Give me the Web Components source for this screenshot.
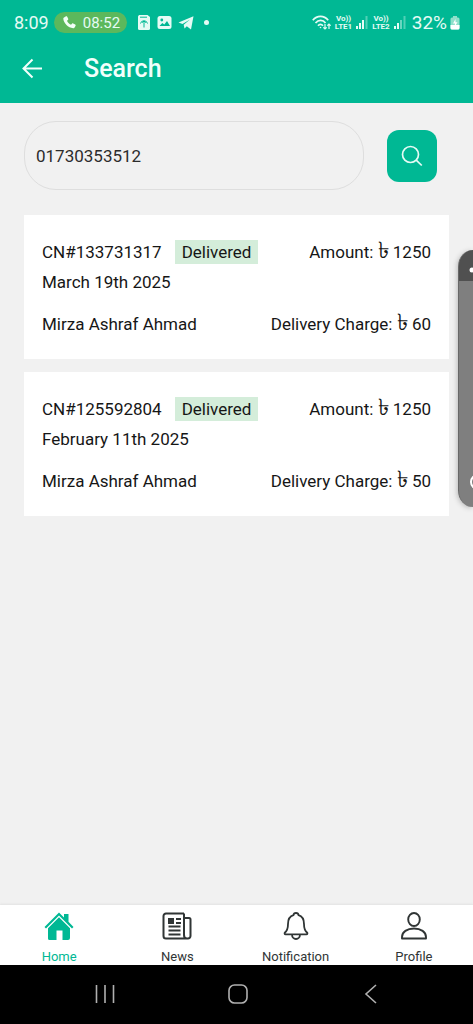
<!DOCTYPE html>
<html lang="en">
<head>
<meta charset="utf-8">
<meta name="viewport" content="width=device-width, initial-scale=1">
<title>Search</title>
<style>
  html, body { margin: 0; }
  body { font-family: Roboto, "Noto Sans", sans-serif; background: #f1f1f1; color: #161616; }
</style>
</head>
<body>
<search-screen></search-screen>
<script>
const define = (name, html, setup) => {
  const template = document.createElement('template');
  template.innerHTML = html;
  customElements.define(name, class extends HTMLElement {
    connectedCallback() {
      if (this.shadowRoot) return;
      this.attachShadow({ mode: 'open' }).append(template.content.cloneNode(true));
      if (setup) setup(this, this.shadowRoot);
    }
  });
};

define('signal-bars', `
<style>:host { display: block; width: 12px; height: 13px; } svg { display: block; }</style>
<svg width="12" height="13" fill="#e6fbf5" aria-hidden="true">
  <rect x="0" y="10" width="2" height="3"/><rect x="3" y="7" width="2" height="6"/>
  <rect class="b" x="6" y="4" width="2" height="9"/><rect x="9.5" y="0" width="2" height="13" opacity=".35"/>
</svg>`, (host, root) => {
  if (host.hasAttribute('weak')) root.querySelector('.b').setAttribute('opacity', '.45');
});

define('volte-label', `
<style>
  :host { display: block; font-size: 8px; line-height: 8px; font-weight: 700; text-align: center; color: #e6fbf5; }
  span { display: block; }
</style>
<span>Vo))</span><span><slot></slot></span>`);

define('status-bar', `
<style>
  :host { display: flex; align-items: center; justify-content: space-between; height: 45px; padding: 0 13px 0 14px; color: #e6fbf5; font-size: 18px; line-height: 20px; }
  div { display: flex; align-items: center; }
  svg { display: block; flex: none; }
  .call { gap: 7px; height: 21px; padding: 0 7px 0 9px; margin: 0 10px 0 5px; border-radius: 11px; background: #5cb85c; font-size: 15px; }
  .notes { gap: 6px; }
  .dot { width: 5px; height: 5px; margin-left: 4px; border-radius: 50%; background: #e6fbf5; }
  .net { gap: 4px; }
  .pct { margin: 0 -1px 0 2px; font-size: 19px; }
</style>
<div>
  <span>8:09</span>
  <div class="call">
    <svg width="13" height="13" viewBox="0 0 13 13"><path d="M1 1.500 3 .300c.5-.2.9-.1 1.200.4l1 2c.2.5.1.9-.3 1.200L4 4.700C4.700 6.400 6 7.800 8 8.800l1-1.100c.4-.4.8-.4 1.200-.2l2 1.100c.5.3.6.7.400 1.200l-1 1.800c-.3.600-.8.800-1.400.7C5 11.700.8 7.400.300 2.800.3 2.200.5 1.800 1 1.500Z" fill="#f2fff8"/></svg>
    <span>08:52</span>
  </div>
  <div class="notes">
    <svg width="14" height="15" viewBox="0 0 14 15"><path fill="#e6fbf5" d="M2 0h8.500L13 2v11.500a1.500 1.500 0 0 1-1.500 1.500h-9A1.500 1.500 0 0 1 1 13.500V1.500Z"/><path d="M3.500 8.500A3.600 3.600 0 0 1 10.500 8.500M7 12.500V6M5.300 7.700l1.700-1.700 1.700 1.700M3 2.200h7" fill="none" stroke="#00b894" stroke-width="1"/></svg>
    <svg width="15" height="15" viewBox="0 0 15 15"><rect x=".5" y="1" width="14" height="13" rx="2.500" fill="#e6fbf5"/><circle cx="4.800" cy="5" r="1.400" fill="#00b894"/><path d="m2.500 11 2.800-3 2 1.600L10 6l3 5Z" fill="#00b894"/></svg>
    <svg width="16" height="14" viewBox="0 0 16 14"><path d="M.5 6.500 15.500.3 13 13.500 8.800 10.200 6.500 12.500 5.700 8.800 12 3.500 4.500 8Z" fill="#e6fbf5"/></svg>
    <span class="dot"></span>
  </div>
</div>
<div class="net">
  <svg width="19" height="16" viewBox="0 0 19 16" fill="none" stroke="#e6fbf5" stroke-width="1.700"><path d="M.8 5.200C5 0 12 0 16.200 5.200M3.500 8C6.500 4.500 11 4.500 13.500 8M6 10.800C7.500 9 9.500 9 11 10.800"/><circle cx="8.500" cy="12.500" r=".8" fill="#e6fbf5" stroke="none"/><path d="M13 9v5M11.300 12.300 13 14l1.700-1.700M17 14V9M15.300 10.700 17 9l1.700 1.700" stroke-width="1.200"/></svg>
  <volte-label>LTE1</volte-label>
  <signal-bars></signal-bars>
  <volte-label>LTE2</volte-label>
  <signal-bars weak></signal-bars>
  <span class="pct">32%</span>
  <svg width="10" height="14" viewBox="0 0 10 14"><rect x="3" width="4" height="2" fill="#8fe0cb"/><rect x=".5" y="1.500" width="9" height="12" rx="1.500" fill="#8fe0cb"/><path d="M.5 9h9v3a1.500 1.500 0 0 1-1.500 1.500H2A1.500 1.500 0 0 1 .5 12Z" fill="#fff"/><path d="M5.500 3 3 7.500h2L4.500 11 7.500 6.300h-2Z" fill="#fff"/></svg>
</div>`);

define('app-header', `
<style>
  :host { display: flex; align-items: center; gap: 40px; height: 48px; padding: 0 22px 10px; color: #f2fffb; }
  button { display: block; padding: 0; border: 0; background: none; color: inherit; }
  svg { display: block; }
  h1 { margin: 0; font-size: 25px; line-height: 32px; font-weight: 500; }
</style>
<button aria-label="Back"><svg width="22" height="22" viewBox="0 0 22 22" fill="none" stroke="currentColor" stroke-width="2"><path d="M20 10.500H2M10.500 1.500 1.500 10.500l9 9"/></svg></button>
<h1><slot></slot></h1>`);

define('search-form', `
<style>
  :host { display: block; }
  form { display: flex; align-items: center; gap: 23px; padding: 0 12px 0 0; }
  input { box-sizing: border-box; flex: 1; min-width: 0; height: 69px; padding: 0 11px; border: 1px solid #dedede; border-radius: 32px; background: #f1f1f1; color: #2c2c2c; font: 17px/24px Roboto, sans-serif; outline: 0; }
  button { display: grid; place-items: center; width: 50px; height: 52px; padding: 0; border: 0; border-radius: 12px; background: #00b894; }
  svg { display: block; }
</style>
<form>
  <input type="text" inputmode="numeric" aria-label="Phone number" value="01730353512">
  <button type="button" aria-label="Search"><svg width="22" height="22" viewBox="0 0 22 22" fill="none" stroke="#e6fbf5" stroke-width="1.700"><circle cx="9.500" cy="9.500" r="8"/><path d="m15.200 15.200 5.600 5.300"/></svg></button>
</form>`);

define('parcel-card', `
<style>
  :host { display: block; padding: 22px 18px 20px; background: #fff; font-size: 17px; line-height: 30px; }
  div { display: flex; align-items: center; justify-content: space-between; }
  .id { justify-content: start; gap: 13px; }
  mark { padding: 0 7px; background: #d4edda; color: inherit; line-height: 24px; }
  p { margin: 0 0 12px; }
  b { font-size: 23px; line-height: 1px; font-weight: 400; }
</style>
<div><div class="id"><slot name="number"></slot><mark><slot name="status"></slot></mark></div><span>Amount: <b>৳</b> <slot name="amount"></slot></span></div>
<p><slot name="date"></slot></p>
<div><slot name="customer"></slot><span>Delivery Charge: <b>৳</b> <slot name="charge"></slot></span></div>`);

define('tab-item', `
<style>
  :host { display: block; }
  a { display: flex; flex-direction: column; align-items: center; gap: 8px; padding-top: 6px; color: #303535; text-decoration: none; font-size: 13px; line-height: 16px; }
  :host([active]) a { color: #00b894; }
  ::slotted(svg) { display: block; }
</style>
<a href="#"><slot name="icon"></slot><span><slot></slot></span></a>`);

define('tab-bar', `
<style>
  :host { display: grid; grid-template-columns: repeat(4, 1fr); height: 60px; background: #fff; box-shadow: 0 -1px 2px #e2e2e2; }
</style>
<tab-item active><svg slot="icon" width="30" height="30" viewBox="0 0 30 30" fill="currentColor"><path d="M15 1.500 20 6.500V3h4.500v7.800L29.500 16l-1.500 1.500L15 4.500 2 17.500.5 16Z"/><path d="M15 6.300 26 17.200V27a2 2 0 0 1-2 2h-5.500V19.500h-6V29H5.500a1.500 1.500 0 0 1-1.500-1.500V17.200Z"/></svg>Home</tab-item>
<tab-item><svg slot="icon" width="30" height="30" viewBox="0 0 30 30" fill="none" stroke="currentColor" stroke-width="2"><path d="M22 2.500H4A2.500 2.500 0 0 0 1.500 5v20A2.500 2.500 0 0 0 4 27.500h22A2.500 2.500 0 0 0 28.500 25V8.500A1.500 1.500 0 0 0 27 7h-4M22 2.500V24c0 2 1 3.500 3 3.500"/><path d="M6.500 15.500h12M6.500 19.500h12M6.500 23.500h12M14 8h5M14 12h5" stroke-width="1.800"/><path d="M6 7h6v6H6Z" fill="currentColor" stroke="none"/></svg>News</tab-item>
<tab-item><svg slot="icon" width="30" height="30" viewBox="0 0 30 30" fill="none" stroke="currentColor" stroke-width="1.800" stroke-linejoin="round"><path d="M15 2c1.500 0 2.400.9 2.500 2.200 3.500 1 5.500 4.200 5.500 8.800 0 5.500 1.200 7 3 8.500.8.8.4 1.800-.500 1.800h-21c-.9 0-1.300-1-.5-1.800C5.800 20 7 18.500 7 13c0-4.600 2-7.800 5.500-8.800C12.600 2.900 13.500 2 15 2ZM11 23.500c0 2.500 1.700 4.500 4 4.500s4-2 4-4.500"/></svg>Notification</tab-item>
<tab-item><svg slot="icon" width="30" height="30" viewBox="0 0 30 30" fill="none" stroke="currentColor" stroke-width="1.900" stroke-linejoin="round"><ellipse cx="15" cy="8.500" rx="5.800" ry="6.500"/><path d="M3 27.500v-1.500c0-5 5-8.500 12-8.500s12 3.500 12 8.500v1.500Z"/></svg>Profile</tab-item>`);

define('system-nav', `
<style>
  :host { display: grid; grid-template-columns: repeat(3, 1fr); place-items: center; height: 59px; padding: 0 36px 0 39px; background: #000; }
  button { display: block; padding: 0 0 2px; border: 0; background: none; color: #b0b0b0; }
  svg { display: block; }
</style>
<button aria-label="Recent apps"><svg width="20" height="20" stroke="currentColor" stroke-width="1.600"><path d="M1.500 1v18M10 1v18M18.500 1v18"/></svg></button>
<button aria-label="Home screen"><svg width="20" height="20" fill="none" stroke="currentColor" stroke-width="1.600"><rect x="1" y="1" width="18" height="18" rx="5.500"/></svg></button>
<button aria-label="Go back"><svg width="20" height="20" fill="none" stroke="currentColor" stroke-width="1.600"><path d="M15 1 5 10l10 9"/></svg></button>`);

define('edge-panel', `
<style>
  :host { display: block; position: absolute; right: 0; top: 250px; width: 15px; height: 257px; box-sizing: border-box; overflow: hidden; border-left: 1px solid #686868; border-radius: 20px 0 0 20px / 22px 0 0 22px; background: linear-gradient(#505050 31px, #7f7f7f 31px); box-shadow: -1px 1px 5px #bbb; }
  svg { display: block; }
</style>
<svg width="14" height="257" aria-hidden="true"><circle cx="13" cy="20" r="2.500" fill="#fff"/><circle cx="19" cy="232" r="7" fill="none" stroke="#fff" stroke-width="2"/></svg>`);

define('search-screen', `
<style>
  :host { display: flex; flex-direction: column; position: relative; min-height: 100vh; }
  header { height: 103px; background: #00b894; }
  main { flex: 1; display: flex; flex-direction: column; padding: 18px 24px; }
  section { display: grid; gap: 13px; margin-top: 25px; }
</style>
<header><status-bar></status-bar><app-header>Search</app-header></header>
<main>
  <search-form></search-form>
  <section>
    <parcel-card><span slot="number">CN#133731317</span><span slot="status">Delivered</span><span slot="amount">1250</span><span slot="date">March 19th 2025</span><span slot="customer">Mirza Ashraf Ahmad</span><span slot="charge">60</span></parcel-card>
    <parcel-card><span slot="number">CN#125592804</span><span slot="status">Delivered</span><span slot="amount">1250</span><span slot="date">February 11th 2025</span><span slot="customer">Mirza Ashraf Ahmad</span><span slot="charge">50</span></parcel-card>
  </section>
</main>
<tab-bar></tab-bar>
<system-nav></system-nav>
<edge-panel></edge-panel>`);
</script>
</body>
</html>
